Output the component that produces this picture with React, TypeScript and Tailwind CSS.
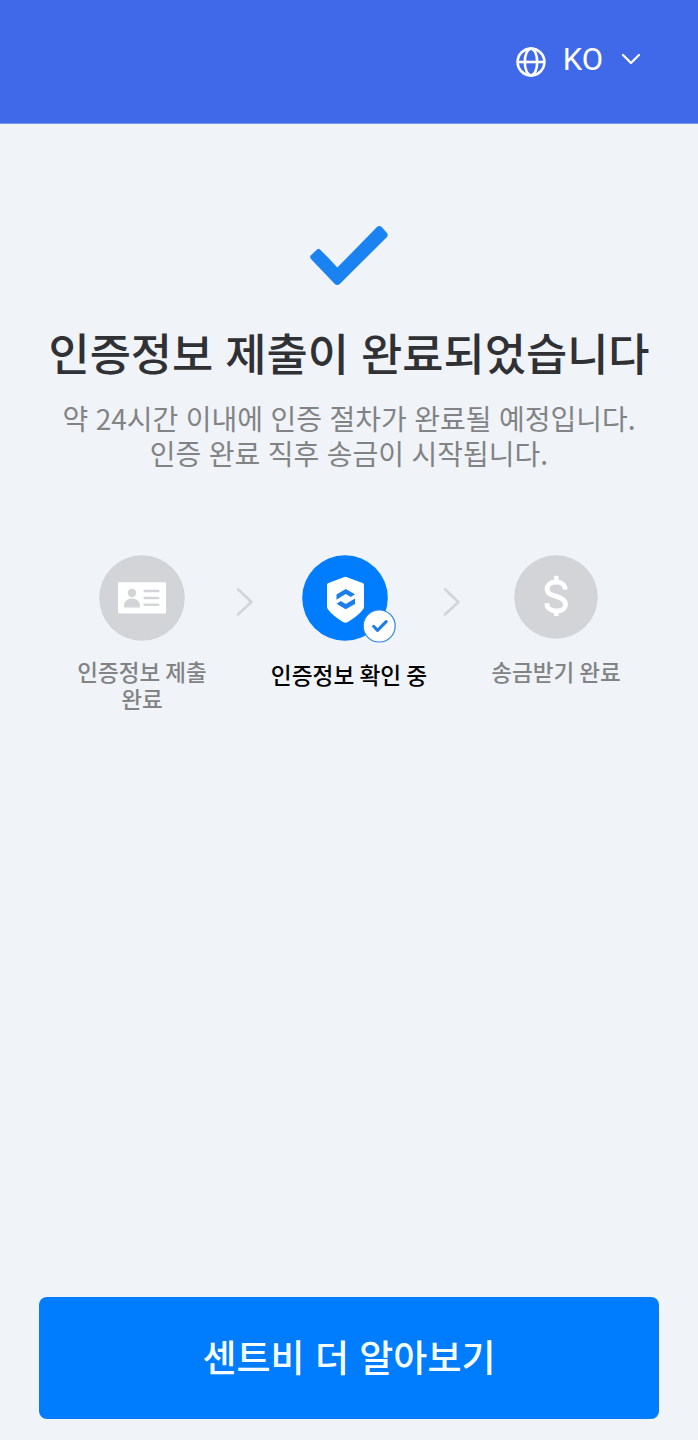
import type { ReactNode } from "react";

function GlobeIcon() {
  return (
    <svg viewBox="0 0 30 30" className="w-[30px] h-[30px]" fill="none" stroke="currentColor" strokeWidth="2.6">
      <circle cx="15" cy="15" r="13.4" />
      <ellipse cx="15" cy="15" rx="6.2" ry="13.4" />
      <path d="M1.6 15h26.8" />
    </svg>
  );
}

function IdCardIcon() {
  return (
    <svg viewBox="0 0 86 86" className="w-[86px] h-[86px]">
      <circle cx="43" cy="43" r="42.8" fill="#d2d4d8" />
      <rect x="19" y="27.2" width="48" height="31.4" rx="1" fill="#fff" />
      <circle cx="32.9" cy="38" r="4.2" fill="#d2d4d8" />
      <path d="M25 52.4v-1.4c0-4.5 3.4-7.4 8-7.4s8 2.9 8 7.4v1.4z" fill="#d2d4d8" />
      <path d="M45.6 36h13.6M45.6 42.9h13.6M45.6 49.8h13.6" stroke="#d2d4d8" strokeWidth="2.5" strokeLinecap="round" />
    </svg>
  );
}

function ShieldIcon() {
  return (
    <svg viewBox="0 0 94 88" className="w-[94px] h-[88px]">
      <circle cx="43" cy="43" r="42.8" fill="#007cff" />
      <path
        d="M41.8 22.2Q43.4 21.2 45 22.2L60.6 28Q62 28.6 62 30V51.5Q62 53.2 61 54.6C57.5 59.5 51.5 63.8 45.8 67Q43.4 68.3 41 67C35.5 63.8 29.5 59.5 26 54.6Q25 53.2 25 51.5V30Q25 28.6 26.4 28Z"
        fill="#fff"
      />
      <path d="M34.5 39.4L43.7 34L53 39.2L48.8 42L43.7 39.1L34.5 44.8Z" fill="#1a7fec" />
      <path d="M53 43.6V48.9L43.7 54.2L34.5 48.8L38.8 46L43.7 49.1Z" fill="#1a7fec" />
      <circle cx="77.2" cy="71" r="16" fill="#fff" stroke="#2b86e8" strokeWidth="1.2" />
      <path d="M71.6 71.3L75.5 75.4L84.2 66.6" fill="none" stroke="#1a7fec" strokeWidth="3" strokeLinecap="round" strokeLinejoin="round" />
    </svg>
  );
}

function DollarIcon() {
  return (
    <svg viewBox="0 0 84 84" className="w-[84px] h-[84px]" fill="none" stroke="#fff" strokeWidth="4.8">
      <circle cx="42" cy="42" r="41.8" fill="#d2d4d8" stroke="none" />
      <path d="M51.1 34.6C51.1 29.8 47.6 27 42.3 27C37 27 33.1 29.8 33.1 34C33.1 38.4 36.6 39.8 42.3 41.4C48 43 51.5 45 51.5 49.3C51.5 53.6 47.7 56 42.6 56C36.6 56 32.8 53 32.8 48.2" />
      <path d="M42.3 20.7v6M42.3 56.5v4.5" strokeWidth="4.4" />
    </svg>
  );
}

function StepArrow() {
  return (
    <svg viewBox="0 0 47 86" className="w-[47px] h-[86px] shrink-0" fill="none">
      <path d="M16 34.3L29.4 47L16 59.5" stroke="#d2d4d8" strokeWidth="2.6" strokeLinecap="round" strokeLinejoin="round" />
    </svg>
  );
}

function Step({ icon, children }: { icon: ReactNode; children: ReactNode }) {
  return (
    <div className="w-40 shrink-0 flex flex-col items-center text-center">
      <div className="h-[88px]">{icon}</div>
      {children}
    </div>
  );
}

export default function App() {
  return (
    <div className="w-[698px] h-[1440px] flex flex-col bg-[#f0f4f9] font-['Noto_Sans_CJK_KR',sans-serif]">
      <header className="h-[124px] shrink-0 flex items-start justify-end bg-[#4069e9] border-b border-[#7995ec] text-white pr-[57px] pt-[41px]">
        <button className="flex items-center">
          <span className="mt-1">
            <GlobeIcon />
          </span>
          <span className="ml-[17px] mr-[18px] font-[Roboto,sans-serif] text-[31px] leading-[38px]">KO</span>
          <svg viewBox="0 0 20 12" className="w-5 h-3 -mt-0.5" fill="none" stroke="currentColor" strokeWidth="2.2" strokeLinecap="round" strokeLinejoin="round">
            <path d="M2 2L10 10L18 2" />
          </svg>
        </button>
      </header>

      <main className="flex-1 flex flex-col items-center pt-[100px]">
        <svg viewBox="0 0 80 62" className="w-20 h-[62px]">
          <path
            d="M8.3 25.2L1.9 31.2Q0.3 33 2 34.9L25.8 60Q28.2 61.8 30.8 60L78 12.9Q79.4 11 78 9L72.4 2.8Q70.4 1 68.2 2.8L28.3 43.6L20 34.5L11 25.6Q9.6 24 8.3 25.2Z"
            fill="#1b82f1"
          />
        </svg>

        <h1 className="mt-[34px] text-[44.8px] leading-[64px] font-medium text-[#2f3135] whitespace-nowrap [word-spacing:2px]">
          인증정보 제출이 완료되었습니다
        </h1>
        <p className="mt-[17px] text-[28px] leading-[35px] text-[#828385] text-center whitespace-nowrap [word-spacing:1.2px]">
          약 24시간 이내에 인증 절차가 완료될 예정입니다.
          <br />
          인증 완료 직후 송금이 시작됩니다.
        </p>

        <div className="mt-[84px] w-[574px] flex items-start">
          <Step icon={<IdCardIcon />}>
            <p className="mt-[15px] text-[22.5px] leading-[27px] font-medium text-[#828385]">
              인증정보 제출
              <br />
              완료
            </p>
          </Step>
          <StepArrow />
          <Step icon={<ShieldIcon />}>
            <p className="mt-[18px] text-[22.7px] leading-7 font-medium text-black whitespace-nowrap">인증정보 확인 중</p>
          </Step>
          <StepArrow />
          <Step icon={<DollarIcon />}>
            <p className="mt-[15px] text-[22.5px] leading-[27px] font-medium text-[#828385]">송금받기 완료</p>
          </Step>
        </div>
      </main>

      <footer className="shrink-0 px-[39px] pb-[21px]">
        <button className="w-full h-[122px] pb-0.5 rounded-lg bg-[#007cff] text-[#f5ffff] text-[37px] font-medium [word-spacing:2px]">
          센트비 더 알아보기
        </button>
      </footer>
    </div>
  );
}
